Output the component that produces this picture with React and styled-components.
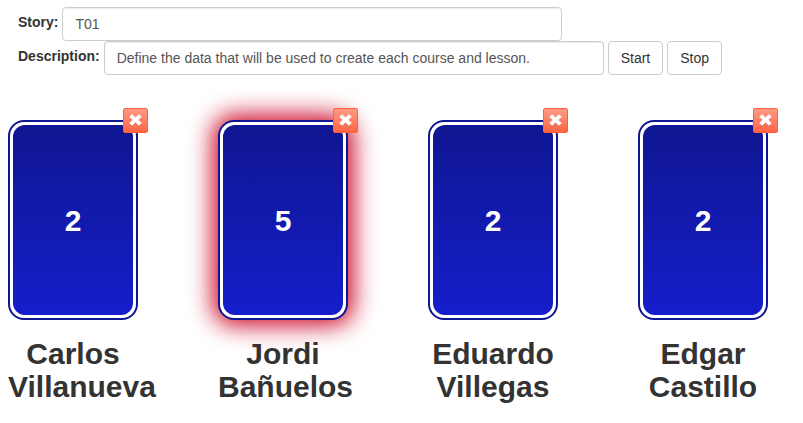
import React from "react";
import styled, { createGlobalStyle } from "styled-components";

const GlobalStyle = createGlobalStyle`
  *, *::before, *::after { box-sizing: border-box; }
  body {
    margin: 0;
    background: #fff;
    color: #333;
    font-family: "Liberation Sans", Arial, sans-serif;
    font-size: 14px;
    line-height: 20px;
  }
`;

const Page = styled.main`
  padding: 7px 8px 20px;
`;

const StoryForm = styled.form`
  padding: 0 10px;
`;

const FieldRow = styled.div`
  display: flex;
  align-items: flex-start;
  gap: 4px;
`;

const Label = styled.label`
  flex: none;
  padding-top: 5px;
  font-weight: 700;
`;

const TextInput = styled.input`
  flex: 0 1 500px;
  min-width: 0;
  height: 34px;
  padding: 6px 12px;
  border: 1px solid #ccc;
  border-radius: 4px;
  background: #fff;
  color: #555;
  font: inherit;
  box-shadow: inset 0 1px 1px rgba(0, 0, 0, 0.075);
`;

const Button = styled.button`
  flex: none;
  height: 34px;
  padding: 6px 12px;
  border: 1px solid #ccc;
  border-radius: 4px;
  background: #fff;
  color: #333;
  font: inherit;
  cursor: pointer;
`;

const Players = styled.ul`
  display: flex;
  flex-wrap: wrap;
  gap: 20px 80px;
  margin: 45px 0 0;
  padding: 0;
  list-style: none;
`;

const Player = styled.li`
  width: 130px;
`;

const Card = styled.div`
  position: relative;
  display: flex;
  height: 200px;
  padding: 3px;
  border: 2px solid #0f1691;
  border-radius: 16px;
  background: #fff;
  box-shadow: ${({ $highlighted }) => ($highlighted ? "0 0 25px 5px #cc0022" : "none")};
`;

const CardFace = styled.div`
  flex: 1;
  display: flex;
  align-items: center;
  justify-content: center;
  border-radius: 12px;
  background: linear-gradient(#0f1691, #151ecb);
  color: #fff;
  font-size: 30px;
  font-weight: 700;
  line-height: 33px;
`;

const RemoveButton = styled.button`
  position: absolute;
  top: -14px;
  right: -12px;
  display: flex;
  align-items: center;
  justify-content: center;
  width: 25px;
  height: 25px;
  padding: 0;
  border: 1px solid #ff5f3c;
  border-radius: 2px;
  background: linear-gradient(#ff9a84, #ff6545);
  cursor: pointer;
`;

const Name = styled.h2`
  margin: 17px 0 0;
  font-size: 30px;
  font-weight: 700;
  line-height: 33px;
  text-align: center;
`;

const CrossIcon = () => (
  <svg width="15" height="15" viewBox="0 0 15 15" aria-hidden="true">
    <path
      d="M4 2L7.5 5.2L11 2L13.4 4.4L10.3 7.5L13.4 10.6L11 13L7.5 9.8L4 13L1.6 10.6L4.7 7.5L1.6 4.4Z"
      fill="#b6523c"
      opacity="0.45"
      transform="translate(0 1)"
    />
    <path
      d="M4 1.5L7.5 4.7L11 1.5L13.4 3.9L10.3 7L13.4 10.1L11 12.5L7.5 9.3L4 12.5L1.6 10.1L4.7 7L1.6 3.9Z"
      fill="#fff"
      stroke="#fff"
      strokeWidth="0.6"
      strokeLinejoin="round"
    />
  </svg>
);

const players = [
  { name: "Carlos Villanueva", vote: 2 },
  { name: "Jordi Bañuelos", vote: 5, highlighted: true },
  { name: "Eduardo Villegas", vote: 2 },
  { name: "Edgar Castillo", vote: 2 },
];

export default function App() {
  return (
    <>
      <GlobalStyle />
      <Page>
        <StoryForm onSubmit={(event) => event.preventDefault()}>
          <FieldRow>
            <Label htmlFor="story">Story:</Label>
            <TextInput id="story" type="text" defaultValue="T01" />
          </FieldRow>
          <FieldRow>
            <Label htmlFor="description">Description:</Label>
            <TextInput
              id="description"
              type="text"
              defaultValue="Define the data that will be used to create each course and lesson."
            />
            <Button type="button">Start</Button>
            <Button type="button">Stop</Button>
          </FieldRow>
        </StoryForm>
        <Players>
          {players.map(({ name, vote, highlighted }) => (
            <Player key={name}>
              <Card $highlighted={highlighted}>
                <CardFace>{vote}</CardFace>
                <RemoveButton type="button" aria-label={`Remove ${name}`}>
                  <CrossIcon />
                </RemoveButton>
              </Card>
              <Name>{name}</Name>
            </Player>
          ))}
        </Players>
      </Page>
    </>
  );
}
